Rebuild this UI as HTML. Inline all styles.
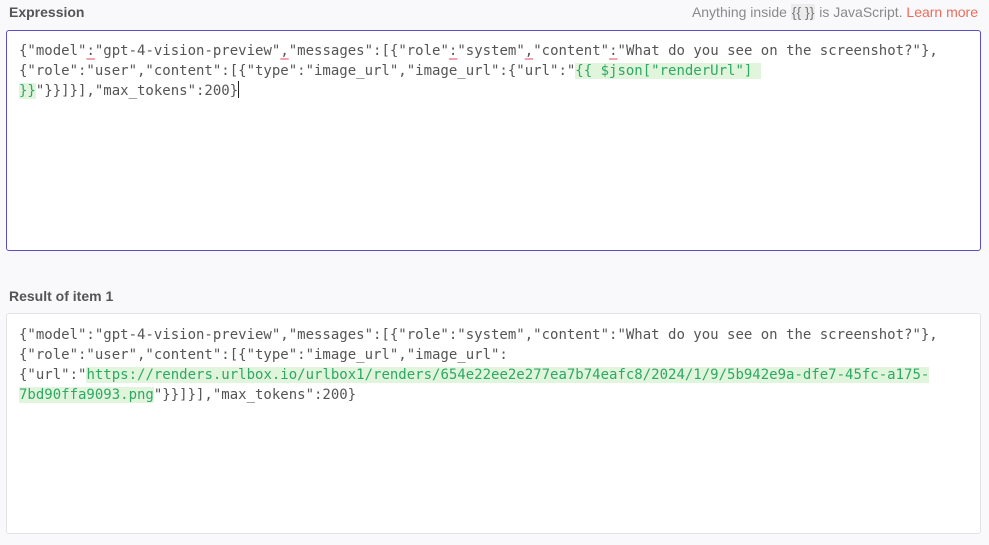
<!DOCTYPE html>
<html><head><style>
body{margin:0;width:989px;height:545px;background:#f9f9fb;font-family:"Liberation Sans",sans-serif;position:relative;overflow:hidden}
.lbl{position:absolute;left:9px;font-size:14px;font-weight:bold;color:#555}
.hint{position:absolute;right:11px;top:4px;font-size:14px;color:#8a8a8a}
.hint code{font-family:"Liberation Sans",sans-serif;background:#ececec;padding:0 1px;color:#777}
.hint a{color:#ee6b5b;text-decoration:none}
.box{position:absolute;left:6px;width:975px;background:#fff;box-sizing:border-box;border-radius:3px}
.code{position:absolute;left:19px;font-family:"DejaVu Sans Mono",monospace;font-size:14px;line-height:20px;color:#555;white-space:pre}
.g{color:#2ea864;background:#e1f4dc}
.u{text-decoration:underline;text-decoration-color:#f3a3b0;text-decoration-thickness:2px;text-underline-offset:3px}
.cur{display:inline-block;width:1px;height:17px;background:#222;vertical-align:-3px}
</style></head><body>
<div class="lbl" style="top:4px">Expression</div>
<div class="hint">Anything inside <code>{{ }}</code> is JavaScript. <a>Learn more</a></div>
<div class="box" style="top:30px;height:221px;border:1px solid #5a4fc8"></div>
<div class="code" style="top:41px">{"model"<span class="u">:</span>"gpt-4-vision-preview"<span class="u">,</span>"messages":[{"role"<span class="u">:</span>"system"<span class="u">,</span>"content"<span class="u">:</span>"What do you see on the screenshot?"},
{"role":"user","content":[{"type":"image_url","image_url":{"url":"<span class="g">{{ $json["renderUrl"] </span>
<span class="g">}}</span>"}}]}],"max_tokens":200}<span class="cur"></span></div>
<div class="lbl" style="top:288px">Result of item 1</div>
<div class="box" style="top:313px;height:221px;border:1px solid #e2e3e8"></div>
<div class="code" style="top:325px">{"model":"gpt-4-vision-preview","messages":[{"role":"system","content":"What do you see on the screenshot?"},
{"role":"user","content":[{"type":"image_url","image_url":
{"url":"<span class="g">https://renders.urlbox.io/urlbox1/renders/654e22ee2e277ea7b74eafc8/2024/1/9/5b942e9a-dfe7-45fc-a175-</span>
<span class="g">7bd90ffa9093.png</span>"}}]}],"max_tokens":200}</div>
</body></html>
